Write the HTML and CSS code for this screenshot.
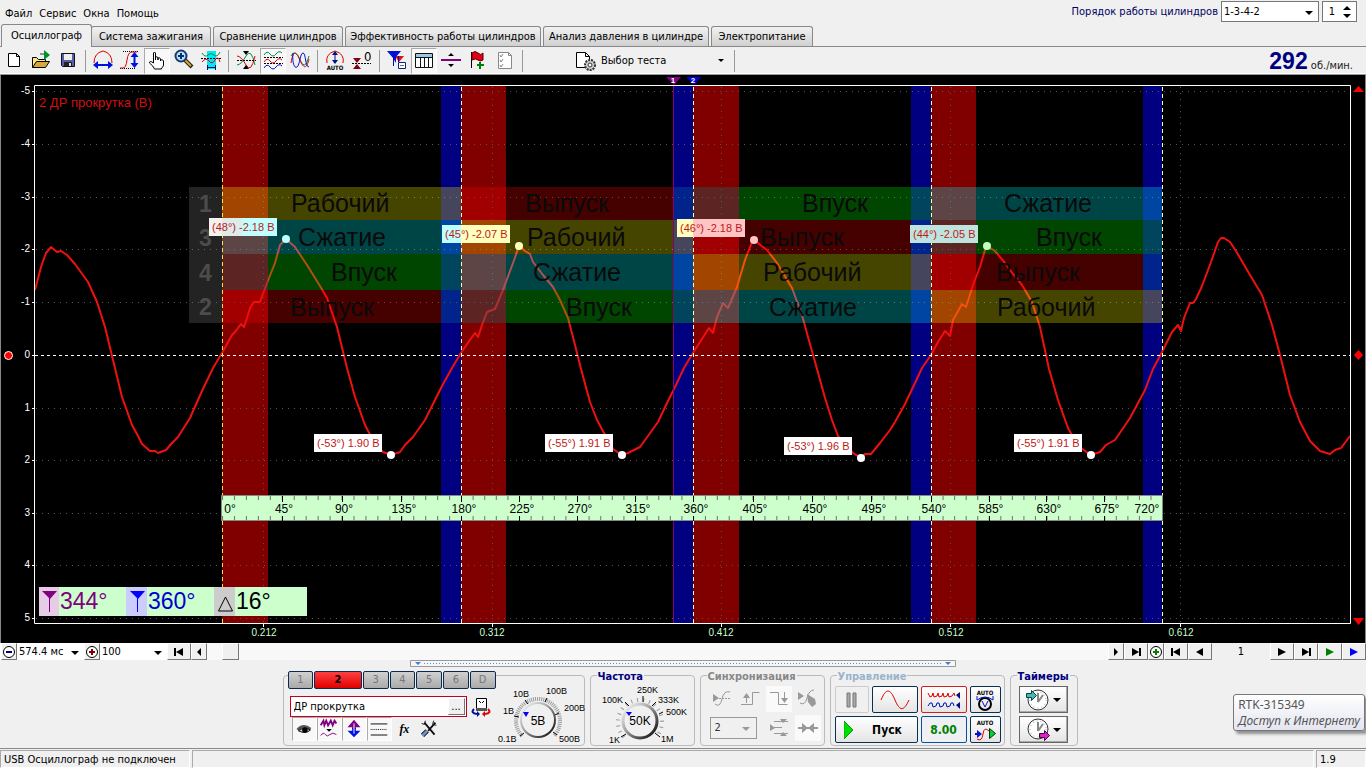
FILE: index.html
```html
<!DOCTYPE html>
<html lang="ru">
<head>
<meta charset="utf-8">
<title>USB Осциллограф</title>
<link rel="stylesheet" href="styles.css">
</head>
<body>
<div class="app">
<header class="top">
  <nav class="menu">
    <button>Файл</button><button>Сервис</button><button>Окна</button><button>Помощь</button>
  </nav>
  <div class="order">
    <label for="order">Порядок работы цилиндров</label>
    <span class="pick order-pick"><select id="order"><option>1-3-4-2</option></select></span>
    <span class="spin"><input id="first" type="text" value="1" aria-label="Первый цилиндр"><svg width="12" height="16" viewBox="0 0 12 16"><path d="M2 6l4-4 4 4zM2 10h8l-4 4z"/></svg></span>
  </div>
</header>

<div class="tabs" role="tablist">
  <button class="tab active" role="tab" aria-selected="true">Осциллограф</button>
  <button class="tab t2" role="tab">Система зажигания</button>
  <button class="tab t3" role="tab">Сравнение цилиндров</button>
  <button class="tab t4" role="tab">Эффективность работы цилиндров</button>
  <button class="tab t5" role="tab">Анализ давления в цилиндре</button>
  <button class="tab t6" role="tab">Электропитание</button>
</div>

<div class="toolbar">
  <button class="tool" aria-label="Новый"><svg viewBox="0 0 26 26"><path d="M7.500 5.500h8l3 3v10h-11zM15.500 5.500v3h3" fill="#fff" stroke="#000"/></svg></button>
  <button class="tool" aria-label="Открыть"><svg viewBox="0 0 26 26"><path d="M4.500 19.500v-10h4l2 2h7v4" fill="#ffe680" stroke="#000"/><path d="M4.500 19.500l4-6h13l-4 6z" fill="#d8a838" stroke="#000"/><path d="M16 2l6 5-6 5z" fill="#00902c"/><path d="M12 6h4" stroke="#333"/></svg></button>
  <button class="tool" aria-label="Сохранить"><svg viewBox="0 0 26 26"><path d="M6.500 5.500h13v13h-12l-1-1z" fill="#5560a8" stroke="#111"/><path d="M9 6h8v6H9z" fill="#eee"/><path d="M9 14h8v4H9z" fill="#222"/><path d="M14 15h2v3h-2z" fill="#ddd"/></svg></button>
  <span class="sep"></span>
  <button class="tool" aria-label="Период"><svg viewBox="0 0 26 26"><path d="M4 15q0-10 9-12q9 2 9 12" fill="none" stroke="#e00000"/><path d="M7 17h12" stroke="#0010e0" stroke-width="2"/><path d="M3 17l5-4v8zM23 17l-5-4v8z" fill="#0010e0"/></svg></button>
  <button class="tool" aria-label="Амплитуда"><svg viewBox="0 0 26 26"><path d="M6 3.500h16M3 20.500h16" stroke="#000" stroke-dasharray="1 1"/><path d="M3 20h3q3 0 4-8t5-8h5" fill="none" stroke="#e00000"/><path d="M17.500 6v12" stroke="#0010e0" stroke-width="2"/><path d="M17.500 4l4 5h-8zM17.500 20l4-5h-8z" fill="#0010e0"/></svg></button>
  <button class="tool pressed" aria-label="Рука"><svg viewBox="0 0 26 26"><path d="M9.500 15V5q1-2 2 0v7V9q2-1 2.500 1v2-2q2-1 2.500 1v2-1q2.500-1 3 1v4q0 2-2 3v1h-7q-1-3-5-6q0-3 4 0" fill="#fff" stroke="#000" stroke-linejoin="round"/></svg></button>
  <button class="tool" aria-label="Лупа"><svg viewBox="0 0 26 26"><path d="M14 12l7 7" stroke="#222" stroke-width="4"/><path d="M14 12l6 6" stroke="#e0a030" stroke-width="2"/><circle cx="10" cy="8" r="5.500" fill="#b8e4f4" stroke="#183870" stroke-width="2"/><path d="M7 8h6M10 5v6" stroke="#0a2a7a" stroke-width="2"/></svg></button>
  <button class="tool" aria-label="Фрагмент"><svg viewBox="0 0 26 26"><path d="M9 3h9v18H9z" fill="#00e8f8"/><path d="M4 5q3 5 6 2t6 0t6-3" fill="none" stroke="#00903a"/><path d="M3 10.500h20" stroke="#000" stroke-dasharray="2 1"/><path d="M4 14q4-5 7-1t6-1t5 2" fill="none" stroke="#e00000"/><path d="M9.500 17v5M17.500 17v5M10 19.500h7" stroke="#001080"/></svg></button>
  <span class="sep"></span>
  <button class="tool" aria-label="Совместить"><svg viewBox="0 0 26 26"><path d="M4 17q4 0 9-9t9 9" fill="none" stroke="#00903a"/><path d="M4 8q4 0 9 9t9-9" fill="none" stroke="#e00000"/><path d="M4 12.500h19" stroke="#000" stroke-dasharray="2 1"/><path d="M10 3h6l-3 4zM10 21h6l-3-4z"/></svg></button>
  <button class="tool pressed" aria-label="Раздельно"><svg viewBox="0 0 26 26" fill="none"><path d="M4 7q3-5 6-1t6 0t6-1" stroke="#00903a"/><path d="M4 9.500h19M4 15.500h19" stroke="#000" stroke-dasharray="2 1"/><path d="M4 14q3-5 6-1t6 0t6-1" stroke="#e00000"/><path d="M4 20q3-5 6-1t6 0t6-1" stroke="#0010d0"/></svg></button>
  <button class="tool" aria-label="Наложить"><svg viewBox="0 0 26 26" fill="none"><path d="M4 8q4-8 9 4t9-4" stroke="#00903a"/><path d="M4 15c2-12 5-13 9-3s7 8 9-1" stroke="#e00000"/><path d="M6 5c-1 8 1 16 4 14s3-14 6-14 2 14 6 14" stroke="#0010d0"/></svg></button>
  <span class="sep"></span>
  <button class="tool" aria-label="Авто"><svg viewBox="0 0 26 26"><path d="M5 15q-2-9 8-12q10 3 8 12" fill="none" stroke="#e00000"/><path d="M13 5v9" stroke="#001080"/><path d="M13 3l3 4h-6zM13 16l3-4h-6z" fill="#001080"/><text x="13" y="22" text-anchor="middle" class="micro">AUTO</text></svg></button>
  <button class="tool" aria-label="Ноль"><svg viewBox="0 0 26 26"><path d="M4 10h8l-4 5zM4 21h8l-4-5z" fill="#800010"/><path d="M3 15.500h19" stroke="#000" stroke-dasharray="2 1"/><text x="15" y="13" class="zero">0</text></svg></button>
  <span class="sep"></span>
  <button class="tool" aria-label="Маркеры"><svg viewBox="0 0 26 26"><path d="M11 8h9l-5 6z" fill="#e01010"/><path d="M3 3h14l-5 6v6l-3-5z" fill="#0010e0"/><path d="M9.500 3v15M14.500 8v6" stroke="#0010a0"/><path d="M14.500 14.500h7v6h-7z" fill="#fff" stroke="#102080"/><path d="M16 17.500h4" stroke="#668"/></svg></button>
  <button class="tool pressed" aria-label="Таблица"><svg viewBox="0 0 26 26"><path d="M4.500 5.500h17v14h-17z" fill="#fff" stroke="#111"/><path d="M5 6h16v3H5z" fill="#9fc4e8"/><path d="M5 9.500h16M9.500 9v10M13.500 9v10M17.500 9v10" stroke="#111"/></svg></button>
  <button class="tool" aria-label="Разделитель"><svg viewBox="0 0 26 26"><path d="M3 12h20" stroke="#800080" stroke-width="2"/><path d="M10 8h6l-3-3zM10 16h6l-3 3z"/></svg></button>
  <button class="tool" aria-label="Добавить флаг"><svg viewBox="0 0 26 26"><path d="M6.500 4v16" stroke="#000"/><path d="M7 5q3-3 6 0t5 0v7q-3 2-5 0t-6 0z" fill="#e00010" stroke="#500"/><path d="M15 14v7M12 17h7" stroke="#008000" stroke-width="2"/></svg></button>
  <button class="tool" aria-label="Отчёт"><svg viewBox="0 0 26 26"><path d="M6.500 4.500h10l3 3v13h-13zM16.500 4.500v3h3" fill="#fff" stroke="#888"/><path d="M8 7l1 2 2-3M8 12l1 2 2-3M8 17l1 2 2-3" fill="none" stroke="#888"/></svg></button>
  <span class="sep"></span>
  <button class="test"><svg width="22" height="22" viewBox="0 0 22 22"><path d="M1.500 2.500h9l4 4v11h-13zM10.500 2.500v4h4" fill="#fff" stroke="#000"/><circle cx="15" cy="15" r="5" fill="#cdd6c8" stroke="#333" stroke-width="2" stroke-dasharray="2 1"/><circle cx="15" cy="15" r="2" fill="#fff" stroke="#333"/></svg><span>Выбор теста</span><i class="arrow"></i></button>
  <span class="sep"></span>
  <output class="rpm"><b>292</b> об./мин.</output>
</div>

<svg class="scope" viewBox="0 75 1366 568" role="img" aria-label="Осциллограмма">
  <rect y="75" width="1366" height="568"/>
  <g fill="#800000"><path d="M222 86h46v537h-46zM461 86h45v537h-45zM693 86h46v537h-46zM931 86h45v537h-45z"/></g>
  <g fill="#000080"><path d="M441 86h20v537h-20zM673 86h20v537h-20zM911 86h20v537h-20zM1143 86h19v537h-19z"/></g>
  <g class="grid"><path d="M36 91.500h1314M36 144.500h1314M36 197.500h1314M36 249.500h1314M36 302.500h1314M36 408.500h1314M36 460.500h1314M36 513.500h1314M36 565.500h1314M36 618.500h1314M263.500 87v536M492.500 87v536M721.500 87v536M950.500 87v536M1180.500 87v536"/></g>
  <text x="39" y="107" class="channel">2 ДР прокрутка (В)</text>
  <path class="wave" d="M35 290L41 267 46 253 51 247 57 252 61 251 67 255 75 264 88 282 97 302 105 327 113 360 122 397 132 425 137 434 142 444 150 451 155 451 158 453 166 450 172 443 178 437 190 418 202 391 213 368 222 353 232 335 235 332 241 324 244 327 247 318 250 308 254 302 260 302 267 283 275 263 280 245 286 239 295 247 307 265 320 286 327 298 337 327 347 368 355 397 365 425 375 444 383 452 391 455 400 452 405 445 413 437 425 420 434 402 442 386 452 368 461 353 465 347 475 333 478 337 482 325 487 312 495 309 503 290 513 263 519 246 525 251 530 254 533 262 543 275 553 287 560 300 568 318 575 345 581 369 590 402 597 420 604 433 613 449 622 455 628 453 640 447 648 436 658 422 667 403 675 387 684 368 693 353 700 342 709 328 713 333 717 317 723 303 728 308 737 287 745 260 752 242 754 240 767 250 777 263 792 288 802 315 808 337 817 369 825 398 832 420 838 436 853 453 861 458 865 454 871 454 880 443 890 430 895 422 905 404 915 383 922 368 931 355 938 342 945 331 950 336 953 320 962 304 966 307 973 285 980 267 985 250 987 246 995 251 1005 263 1013 274 1022 285 1032 302 1040 327 1049 369 1058 400 1068 428 1078 446 1091 455 1100 452 1106 445 1115 440 1130 418 1145 390 1153 369 1162 352 1168 340 1172 332 1178 325 1181 331 1184 318 1190 303 1193 303 1196 299 1202 286 1211 262 1218 242 1221 238 1224 238 1230 242 1236 251 1250 275 1262 295 1272 325 1280 355 1290 395 1300 422 1310 441 1320 451 1330 454 1335 450 1341 448 1350 436"/>
  <g opacity=".27">
    <g fill="#ff0"><path d="M222 187h239v33h-239zM461 220h232v34h-232zM693 254h238v36h-238zM931 290h231v33h-231z"/></g>
    <g fill="#0ff"><path d="M222 220h239v34h-239zM461 254h232v36h-232zM693 290h238v33h-238zM931 187h231v33h-231z"/></g>
    <g fill="#0f0"><path d="M268 254h193v36h-193zM506 290h187v33h-187zM739 187h192v33h-192zM976 220h186v34h-186z"/></g>
    <g fill="#f00"><path d="M222 290h219v33h-219zM461 187h212v33h-212zM693 220h218v34h-218zM931 254h212v36h-212z"/></g>
    <g fill="#008585"><path d="M222 254h46v36h-46zM461 290h45v33h-45zM693 187h46v33h-46zM931 220h45v34h-45z"/></g>
    <g fill="#0085ae"><path d="M441 290h20v33h-20zM673 187h20v33h-20zM911 220h20v34h-20zM1143 254h19v36h-19z"/></g>
    <path d="M189 187h33v136h-33z" fill="#808080"/>
  </g>
  <g class="cyl"><text x="199" y="212">1</text><text x="199" y="246">3</text><text x="199" y="281">4</text><text x="199" y="315">2</text></g>
  <g class="phase">
    <text x="291" y="212">Рабочий</text><text x="525" y="212">Выпуск</text><text x="802" y="212">Впуск</text><text x="1004" y="212">Сжатие</text>
    <text x="298" y="246">Сжатие</text><text x="527" y="246">Рабочий</text><text x="760" y="246">Выпуск</text><text x="1036" y="246">Впуск</text>
    <text x="331" y="281">Впуск</text><text x="533" y="281">Сжатие</text><text x="763" y="281">Рабочий</text><text x="996" y="281">Выпуск</text>
    <text x="290" y="316">Выпуск</text><text x="566" y="316">Впуск</text><text x="769" y="316">Сжатие</text><text x="997" y="316">Рабочий</text>
  </g>
  <path d="M35 355.500h1316" class="zero-line"/>
  <path d="M461.500 87v536M693.500 87v536M931.500 87v536M1162.500 87v536" class="stroke-line"/>
  <path d="M222.500 87v536" class="stroke-line first"/>
  <path d="M673.500 82v541" stroke="#800080"/>
  <path d="M666 77h15l-7 8z" fill="#800080"/><path d="M686 77h15l-7 8z" fill="#0000e0"/>
  <g class="mark"><text x="673" y="83">1</text><text x="693" y="83">2</text></g>
  <path d="M34.500 85.500h1316v538h-1316z" fill="none" stroke="#fff"/>
  <path d="M32 91.500h3M32 144.500h3M32 197.500h3M32 249.500h3M32 302.500h3M32 355.500h3M32 408.500h3M32 460.500h3M32 513.500h3M32 565.500h3M32 618.500h3M263.500 624v3M492.500 624v3M721.500 624v3M950.500 624v3M1180.500 624v3" stroke="#fff"/>
  <g class="ylab"><text x="30" y="94">-5</text><text x="30" y="147">-4</text><text x="30" y="200">-3</text><text x="30" y="252">-2</text><text x="30" y="305">-1</text><text x="30" y="358">0</text><text x="30" y="411">1</text><text x="30" y="463">2</text><text x="30" y="516">3</text><text x="30" y="568">4</text><text x="30" y="621">5</text></g>
  <g class="xlab"><text x="264" y="636">0.212</text><text x="492" y="636">0.312</text><text x="721" y="636">0.412</text><text x="951" y="636">0.512</text><text x="1181" y="636">0.612</text></g>
  <circle cx="8.500" cy="355.500" r="4" fill="#f00" stroke="#fff"/>
  <path d="M1353 92l5.500-6 5.500 6zM1353 618h11l-5.500 7zM1354 355l4.500-5 4.500 5-4.500 5z" fill="#f00"/>

  <g class="note">
    <path d="M209 218h68v18h-68z" fill="#beffff"/><path d="M209 218h13v18h-13z" fill="#f4f0f0"/><path d="M222 218h20v18h-20z" fill="#ddebeb"/><text x="212" y="231">(48°) -2.18 В</text>
    <path d="M442 225h68v18h-68z" fill="#ffffbe"/><path d="M442 225h19v18h-19z" fill="#beffff"/><text x="445" y="238">(45°) -2.07 В</text>
    <path d="M677 219h68v18h-68z" fill="#ffc4c4"/><path d="M677 219h16v18h-16z" fill="#ffffbe"/><text x="680" y="232">(46°) -2.18 В</text>
    <path d="M910 225h68v18h-68z" fill="#bee4e0"/><text x="913" y="238">(44°) -2.05 В</text>
    <path d="M314 434h68v18h-68zM545 434h68v18h-68zM784 437h68v18h-68zM1014 434h68v18h-68z" fill="#fff"/>
    <text x="317" y="447">(-53°) 1.90 В</text><text x="548" y="447">(-55°) 1.91 В</text><text x="787" y="450">(-53°) 1.96 В</text><text x="1017" y="447">(-55°) 1.91 В</text>
  </g>
  <circle cx="286" cy="239" r="4" fill="#beffff"/><circle cx="519" cy="246" r="4" fill="#ffffbe"/><circle cx="754" cy="240" r="4" fill="#ffc4c4"/><circle cx="987" cy="246" r="4" fill="#beffbe"/>
  <g fill="#fff"><circle cx="391" cy="455" r="4"/><circle cx="622" cy="455" r="4"/><circle cx="861" cy="458" r="4"/><circle cx="1091" cy="455" r="4"/></g>

  <path d="M221.500 495.500h941v25h-941z" fill="#cfc" stroke="#888"/>
  <g class="ticks"><path pathLength="20" d="M222 498h239"/><path pathLength="20" d="M461 498h232"/><path pathLength="20" d="M693 498h238"/><path pathLength="20" d="M931 498h231"/><path pathLength="20" d="M222 518h239"/><path pathLength="20" d="M461 518h232"/><path pathLength="20" d="M693 518h238"/><path pathLength="20" d="M931 518h231"/></g>
  <path d="M282.500 496v6M342.500 496v6M401.500 496v6M461.500 496v6M519.500 496v6M577.500 496v6M635.500 496v6M693.500 496v6M753.500 496v6M812.500 496v6M871.500 496v6M931.500 496v6M989.500 496v6M1046.500 496v6M1104.500 496v6M282.500 516v5M342.500 516v5M401.500 516v5M461.500 516v5M519.500 516v5M577.500 516v5M635.500 516v5M693.500 516v5M753.500 516v5M812.500 516v5M871.500 516v5M931.500 516v5M989.500 516v5M1046.500 516v5M1104.500 516v5" stroke="#000"/>
  <g class="deg"><text x="230" y="513">0°</text><text x="284" y="513">45°</text><text x="344" y="513">90°</text><text x="404" y="513">135°</text><text x="464" y="513">180°</text><text x="522" y="513">225°</text><text x="580" y="513">270°</text><text x="638" y="513">315°</text><text x="696" y="513">360°</text><text x="755" y="513">405°</text><text x="815" y="513">450°</text><text x="874" y="513">495°</text><text x="934" y="513">540°</text><text x="991" y="513">585°</text><text x="1049" y="513">630°</text><text x="1107" y="513">675°</text><text x="1147" y="513">720°</text></g>

  <path d="M39 587h268v29h-268z" fill="#cfc"/><path d="M39 587h20v29h-20z" fill="#e6cce6"/><path d="M126 587h21v29h-21z" fill="#ccf"/><path d="M214 587h21v29h-21z" fill="#ccc"/>
  <path d="M42 591h15l-7 8zM49 598h1v14h-1z" fill="#800080"/><path d="M130 591h15l-7 8zM137 598h1v14h-1z" fill="#00f"/><path d="M225.500 597l-7 14h14z" fill="none" stroke="#000"/>
  <g class="cursor"><text x="60" y="609" fill="#800080">344°</text><text x="148" y="609" fill="#0000d0">360°</text><text x="236" y="609">16°</text></g>
  <path d="M.500 75v568M1365.500 75v568" stroke="#888"/>
</svg>

<div class="nav">
  <button class="n16" aria-label="Уменьшить"><svg width="14" height="14" viewBox="0 0 14 14"><circle cx="7" cy="7" r="5.500" fill="#fff" stroke="#000"/><path d="M4 7h6" stroke="#000080" stroke-width="2"/></svg></button>
  <span class="pick wide"><select aria-label="Развёртка"><option>574.4 мс</option></select></span>
  <button class="n16" aria-label="Увеличить"><svg width="14" height="14" viewBox="0 0 14 14"><circle cx="7" cy="7" r="5.500" fill="#fff" stroke="#000"/><path d="M4 7h6M7 4v6" stroke="#800000" stroke-width="2"/></svg></button>
  <span class="pick wide"><select aria-label="Масштаб"><option>100</option></select></span>
  <button class="n24" aria-label="В начало"><svg width="12" height="10" viewBox="0 0 12 10"><path d="M1 1h2v8H1zM3 5l7-4v8z"/></svg></button>
  <button class="n16" aria-label="Влево"><svg width="12" height="10" viewBox="0 0 12 10"><path d="M4 5l4-4v8z"/></svg></button>
  <div class="track"><button class="thumb" aria-label="Ползунок"></button></div>
  <button class="n16" aria-label="Вправо"><svg width="12" height="10" viewBox="0 0 12 10"><path d="M8 5L4 1v8z"/></svg></button>
  <button class="n24" aria-label="В конец"><svg width="12" height="10" viewBox="0 0 12 10"><path d="M9 1h2v8H9zM9 5L2 1v8z"/></svg></button>
  <button class="n16" aria-label="Добавить"><svg width="14" height="14" viewBox="0 0 14 14"><circle cx="7" cy="7" r="5.500" fill="#fff" stroke="#000"/><path d="M4 7h6M7 4v6" stroke="#008000" stroke-width="2"/></svg></button>
  <button class="n24" aria-label="Первый кадр"><svg width="12" height="10" viewBox="0 0 12 10"><path d="M1 1h2v8H1zM3 5l7-4v8z"/></svg></button>
  <button class="n24" aria-label="Предыдущий кадр"><svg width="12" height="10" viewBox="0 0 12 10"><path d="M2 5l7-4v8z"/></svg></button>
  <input class="frame" type="text" value="1" aria-label="Кадр">
  <button class="n24" aria-label="Следующий кадр"><svg width="12" height="10" viewBox="0 0 12 10"><path d="M10 5L2 1v8z"/></svg></button>
  <button class="n24" aria-label="Последний кадр"><svg width="12" height="10" viewBox="0 0 12 10"><path d="M9 1h2v8H9zM9 5L2 1v8z"/></svg></button>
  <button class="n24" aria-label="Воспроизвести"><svg width="12" height="10" viewBox="0 0 12 10"><path d="M10 5L2 1v8z" fill="#008000"/></svg></button>
  <button class="n24" aria-label="Воспроизвести всё"><svg width="12" height="10" viewBox="0 0 12 10"><path d="M10 5L2 1v8z" fill="#00f"/></svg></button>
</div>

<div class="splitter"><svg width="546" height="7" viewBox="0 0 546 7"><path d="M.500 .500h545v6H.500z" fill="#f6f6f6" stroke="#999"/><path d="M14 3.500h518" stroke="#4a90e0" stroke-dasharray="1 2"/><path d="M5 2h6l-3 3zM535 2h6l-3 3z" fill="#3a80d8"/></svg></div>

<main class="panel">
  <section class="group channel-group" aria-label="Канал">
    <div class="chan-left">
      <div class="chans"><button>1</button><button class="on">2</button><button>3</button><button>4</button><button>5</button><button>6</button><button>D</button></div>
      <div class="probe"><span class="probe-box"><input type="text" value="ДР прокрутка" aria-label="Датчик"><button aria-label="Выбрать датчик">...</button></span>
        <button class="flat" aria-label="Поменять"><svg width="20" height="20" viewBox="0 0 20 20"><path d="M5.500 1.500h10v10h-10z" fill="#fff" stroke="#000"/><path d="M8 4l2 2M13 4l-2 2" stroke="#000"/><path d="M5 11h11v3H5z" fill="#555"/><path d="M3 12q-4 4 3 5" fill="none" stroke="#0010a0" stroke-width="2"/><path d="M17 12q4 4-3 5" fill="none" stroke="#e00000" stroke-width="2"/><path d="M6 14v6l3-3z" fill="#0010a0"/><path d="M14 14v6l-3-3z" fill="#e00000"/></svg></button></div>
      <div class="modes">
        <button class="tool pressed" aria-label="Видимость"><svg viewBox="0 0 26 26"><path d="M6 14q6-7 14-1" fill="none" stroke="#555" stroke-width="3"/><path d="M7 15q6-5 13-1-5 5-13 1z" fill="#ccc" stroke="#000"/><circle cx="14" cy="14" r="3"/></svg></button>
        <button class="tool pressed" aria-label="Фильтр"><svg viewBox="0 0 26 26"><path d="M4 9l3-5 1 5 2-5 2 5 3-5 2 5 2-5 2 3" fill="none" stroke="#800080" stroke-width="2"/><path d="M10 13h6l-3 3z"/><path d="M4 20q3-4 5-1t5 0t7 0" fill="none" stroke="#800080"/></svg></button>
        <button class="tool pressed" aria-label="Инверсия"><svg viewBox="0 0 26 26"><path d="M13 3l7 8h-5v2h-4v-2H6z" fill="#800080"/><path d="M13 22l7-7h-5v-3h-4v3H6z" fill="#0010e0"/><path d="M13 7v11" stroke="#fff"/></svg></button>
        <button class="tool pressed" aria-label="Связь"><svg viewBox="0 0 26 26"><path d="M4 7.500h18M4 19.500h18" stroke="#000"/><path d="M4 13.500h18" stroke="#000" stroke-dasharray="1 1"/></svg></button>
        <button class="tool" aria-label="Функция"><svg viewBox="0 0 26 26"><text x="8" y="17" class="fx">fx</text></svg></button>
        <button class="tool" aria-label="Настройка"><svg viewBox="0 0 26 26"><path d="M8 6l11 13M20 6l-8 9" stroke="#111" stroke-width="2"/><path d="M11 15l-5 5" stroke="#111" stroke-width="5"/><path d="M11 15l-5 5" stroke="#6a94d0" stroke-width="3"/><path d="M5 7l3 1 1-4M18 4l-1 4 4 1" fill="none" stroke="#111"/></svg></button>
      </div>
    </div>
    <svg class="knob" width="90" height="68" viewBox="496 680 90 68">
      <defs><linearGradient id="rim" x1="0" y1="0" x2="1" y2="1"><stop offset="0" stop-color="#fff"/><stop offset=".4" stop-color="#aaa"/><stop offset="1" stop-color="#000"/></linearGradient></defs>
      <path d="M521 736A22 22 0 1 1 553 736" fill="none" stroke="#999" stroke-width="4" stroke-dasharray="1 1"/>
      <path d="M519 736l4-3M513 716l5 1M524 700l3 4M546 698l-2 4M558 713l-4 2M556 735l-4-3" stroke="#000"/>
      <circle cx="537" cy="720" r="17" fill="#f0f0f0" stroke="url(#rim)" stroke-width="2"/><path d="M522 712h6l-3 5z" fill="#00f"/>
      <g class="scale"><text x="497" y="742">0.1В</text><text x="502" y="714">1В</text><text x="512" y="697">10В</text><text x="545" y="694">100В</text><text x="563" y="711">200В</text><text x="558" y="742">500В</text></g><text x="537" y="725" class="value">5В</text>
    </svg>
  </section>
  <section class="group freq"><h2>Частота</h2>
    <svg class="knob" width="90" height="64" viewBox="600 682 90 64">
      <path d="M625 736A22 22 0 1 1 657 736" fill="none" stroke="#999" stroke-width="4" stroke-dasharray="1 5"/>
      <path d="M622 736l5-3M626 701l4 4M644 695v6M657 701l-4 4M664 711l-4 2M661 736l-5-4" stroke="#000"/>
      <circle cx="641" cy="720" r="17" fill="#f0f0f0" stroke="url(#rim)" stroke-width="3"/><path d="M627 711h6l-3 4z" fill="#00f"/>
      <g class="scale"><text x="610" y="742">1K</text><text x="603" y="702">100K</text><text x="638" y="692">250K</text><text x="659" y="702">333K</text><text x="667" y="714">500K</text><text x="662" y="741">1M</text></g><text x="641" y="724" class="value">50K</text>
    </svg>
  </section>
  <section class="group sync"><h2 class="dim">Синхронизация</h2>
    <div class="sync-grid">
      <button class="tool" disabled aria-label="Авто"><svg viewBox="0 0 26 26"><path d="M5 8v8l6-4z" fill="#999"/><path d="M7 18q5 4 7-5t8-7" fill="none" stroke="#999"/><path d="M11 12.500h11" fill="none" stroke="#999" stroke-dasharray="2 1"/></svg></button>
      <button class="tool" disabled aria-label="Фронт"><svg viewBox="0 0 26 26"><path d="M4 18.500h11.500v-12h7M9.500 17V9" fill="none" stroke="#999"/><path d="M6 12l3.500-5 3.500 5z" fill="#999"/></svg></button>
      <button class="tool hatched" disabled aria-label="Спад"><svg viewBox="0 0 26 26"><path d="M4 6.500h8.500v12h9M18.500 6v9" fill="none" stroke="#999"/><path d="M15 12l3.500 5 3.500-5z" fill="#999"/></svg></button>
      <button class="tool" disabled aria-label="Ручная"><svg viewBox="0 0 26 26"><path d="M3 6v8l6-4z" fill="#999"/><path d="M5 17q5 3 7-5t7-8" fill="none" stroke="#999"/><path d="M12 8l8 5 1 5-4 3-4-5z" fill="#999"/></svg></button>
      <span class="pick sync-pick"><select disabled aria-label="Канал синхронизации"><option>2</option></select></span>
      <button class="tool" disabled aria-label="Уровень"><svg viewBox="0 0 26 26"><path d="M8 6.500h14M8 12.500h8M8 18.500h14" stroke="#999"/><path d="M14 4h7l-4 4zM14 21h7l-4-4zM4 9v7l5-3z" fill="#999"/></svg></button>
      <button class="tool hatched" disabled aria-label="Центр"><svg viewBox="0 0 26 26"><path d="M3 13h20" stroke="#999" stroke-width="2"/><path d="M7 8l6 5-6 5zM19 8l-6 5 6 5z" fill="#999"/></svg></button>
    </div>
  </section>
  <section class="group control"><h2 class="pale">Управление</h2>
    <div class="control-grid">
      <button class="cmd off" aria-label="Пауза"><svg width="14" height="18" viewBox="0 0 14 18"><path d="M2 2h3v14H2zM8 2h3v14H8z" fill="#aaa" stroke="#777"/></svg></button>
      <button class="cmd" aria-label="Одиночный"><svg width="32" height="22" viewBox="0 0 32 22"><path d="M2 11C7-1 11-1 16 11s9 11 14 0" fill="none" stroke="#e00000"/></svg></button>
      <button class="cmd red" aria-label="Непрерывный"><svg width="36" height="22" viewBox="0 0 36 22" fill="none"><path d="M2 4l2 4 2-1 1-3 1 4 3-1 1-3 1 4 3-1 1-3 1 4 3-1 1-3 1 4 3-1 2-3 1 3" stroke="#e00000"/><path d="M2 17l2-3 2 0 1 4 3-1 1-3h2l1 4 3-1 1-3h2l1 4 3-1 1-3h2l1 3" stroke="#0010c0"/><path d="M34 3v7l-4-4zM34 13v7l-4-4z" fill="#001080"/></svg></button>
      <button class="cmd" aria-label="Автодиапазон"><svg width="26" height="24" viewBox="0 0 26 24"><text x="13" y="7" class="micro" text-anchor="middle">AUTO</text><circle cx="13" cy="16" r="6" fill="none" stroke="#000" stroke-width="2"/><path d="M10 13l3 6 3-6" fill="none" stroke="#0010d0"/><path d="M5 12q8-6 16 0M5 12v-4M21 12v-4" fill="none" stroke="#0010d0"/></svg></button>
      <button class="cmd start"><svg width="10" height="20" viewBox="0 0 10 20"><path d="M0 1l9 9-9 9z" fill="#00e000" stroke="#00a000"/></svg><span>Пуск</span></button>
      <button class="cmd num">8.00</button>
      <button class="cmd" aria-label="Автозапуск"><svg width="26" height="24" viewBox="0 0 26 24"><text x="13" y="7" class="micro" text-anchor="middle">AUTO</text><path d="M3 16h4" stroke="#0010d0" stroke-width="2"/><path d="M5 12l5 4-5 4z" fill="#0010d0"/><path d="M5 21q5 3 6-5t6-3" fill="none" stroke="#e00000"/><path d="M17.500 10.500v10l6-5z" fill="#00d040" stroke="#030"/></svg></button>
    </div>
  </section>
  <section class="group timers"><h2>Таймеры</h2>
    <button class="timer" aria-label="Таймер запуска"><svg width="26" height="24" viewBox="0 0 26 24"><circle cx="14" cy="12" r="10" fill="#fff" stroke="#333"/><circle cx="14" cy="12" r="8" fill="none" stroke="#999" stroke-dasharray="1 3"/><path d="M14 14V5M14 14l5-7" stroke="#888" stroke-width="2"/><path d="M2.500 5.500h5v-3l5 5-5 5v-3h-5z" fill="#48b8b0" stroke="#044"/></svg><i class="arrow"></i></button>
    <button class="timer" aria-label="Таймер останова"><svg width="26" height="24" viewBox="0 0 26 24"><circle cx="14" cy="11" r="10" fill="#fff" stroke="#333"/><circle cx="14" cy="11" r="8" fill="none" stroke="#999" stroke-dasharray="1 3"/><path d="M14 13V4M14 13l5-7" stroke="#888" stroke-width="2"/><path d="M15.500 15.500h5v-3l5 5-5 5v-3h-5z" fill="#e020c0" stroke="#404"/></svg><i class="arrow"></i></button>
  </section>
</main>

<footer class="status"><span class="st-a">USB Осциллограф не подключен</span><span class="st-b"></span><span class="st-c">1.9</span></footer>
<div class="tip" role="tooltip"><span>RTK-315349</span><em>Доступ к Интернету</em></div>
</div>
</body>
</html>
```

FILE: styles.css
```css
* { box-sizing: border-box; }
body { margin: 0; background: #f0f0f0; color: #000; font: 11px/14px "DejaVu Sans Condensed", "DejaVu Sans", sans-serif; }
button, input, select { font: inherit; color: inherit; margin: 0; padding: 0; border: 0; background: none; border-radius: 0; }
button { display: flex; align-items: center; justify-content: center; white-space: nowrap; }
svg { display: block; flex: none; }
.app { position: relative; display: flex; flex-direction: column; min-height: 100vh; }

.top { display: flex; justify-content: space-between; height: 24px; }
.menu { display: flex; gap: 7px; padding: 3px 5px 0; }
.order { display: flex; align-items: center; gap: 3px; padding: 0 9px 1px 0; color: #000060; }
.pick { position: relative; display: block; background: #fff; color: #000; }
.pick select { appearance: none; width: 100%; height: 100%; padding-left: 2px; opacity: 1; }
.pick::after, .arrow { content: ""; width: 0; height: 0; border: 4px solid transparent; border-top-color: #000; border-bottom: 0; }
.pick::after { position: absolute; right: 5px; top: 50%; margin-top: -1px; pointer-events: none; }
.order-pick { width: 98px; height: 21px; border: 1px solid #777; }
.spin { display: flex; align-items: center; width: 35px; height: 21px; border: 1px solid #777; background: #fff; color: #000; }
.spin input { width: 18px; text-align: center; }

.tabs { display: flex; align-items: flex-end; gap: 2px; height: 23px; padding-left: 1px; border-bottom: 1px solid #888; }
.tab { height: 20px; border: 1px solid #888; border-bottom: 0; border-radius: 3px 3px 0 0; background: linear-gradient(#f2f2f2, #d0d0d0); }
.tab.active { width: 91px; height: 23px; margin: 0 -3px -1px 0; background: #f0f0f0; }
.t2 { width: 120px; } .t3 { width: 130px; } .t4 { width: 196px; } .t5 { width: 166px; } .t6 { width: 102px; }

.toolbar { display: flex; align-items: center; gap: 1px; height: 28px; padding: 0 13px 0 1px; border-bottom: 1px solid #999; box-shadow: inset 0 -1px #fff; }
.tool { width: 26px; height: 26px; flex: none; }
.tool svg { width: 26px; height: 26px; }
.pressed { border: 1px solid #aaa; border-right-color: #fff; border-bottom-color: #fff; background: #f8f8f8; }
.sep { width: 1px; height: 22px; margin: 0 3px; background: #999; flex: none; }
.micro { font: bold 6px "DejaVu Sans Condensed", sans-serif; }
.zero { font: 13px "DejaVu Sans Condensed", sans-serif; }
.fx { font: italic bold 13px "Liberation Serif", serif; }
.test { width: 203px; height: 26px; padding: 0 6px 0 48px; justify-content: flex-start; gap: 4px; }
.arrow { display: block; margin-left: auto; }
.test .arrow { border-width: 3px 3px 0; }
.rpm { margin-left: auto; color: #222; }
.rpm b { font: bold 23px/24px "Liberation Sans", sans-serif; color: #000080; }

.scope { width: 100%; height: auto; font-family: "Liberation Sans", sans-serif; }
.grid path { fill: none; stroke: #555; stroke-dasharray: 1 5; }
.channel { font-size: 13px; fill: #d01010; }
.wave { fill: none; stroke: #f01010; stroke-width: 2; stroke-linejoin: round; }
.zero-line { stroke: #fff; stroke-dasharray: 3 3; }
.stroke-line { stroke: #ffffa0; stroke-dasharray: 4 3; }
.stroke-line.first { stroke: #ffe040; }
.phase { font-size: 25px; fill: #0a0a0a; }
.cyl { font-size: 23px; font-weight: bold; fill: #4c4c4c; }
.mark { font-size: 8px; font-weight: bold; fill: #fff; text-anchor: middle; }
.ylab { font-size: 10px; fill: #fff; text-anchor: end; }
.xlab { font-size: 10px; fill: #cfc; text-anchor: middle; }
.note { font-size: 11px; }
.note text { fill: #c01818; }
.ticks path { fill: none; stroke: #777; stroke-width: 4; stroke-dasharray: .09 .91; }
.deg { font-size: 12px; text-anchor: middle; }
.cursor { font-size: 23px; }

.nav { display: flex; height: 17px; padding-left: 1px; background: #fff; }
.nav button { height: 17px; border: 1px solid; border-color: #fff #777 #777 #fff; background: #f0f0f0; flex: none; }
.nav .n16 { width: 16px; }
.nav .n24 { width: 24px; }
.nav .wide { width: 67px; }
.track { flex: 1; padding-left: 15px; background: #f8f8f8; }
.nav .thumb { width: 17px; }
.frame { width: 58px; text-align: center; background: #f0f0f0; }
.splitter { display: flex; justify-content: center; height: 8px; }

.panel { display: flex; justify-content: center; gap: 5px; height: 81px; padding: 7px 6px 2px 0; border-bottom: 1px solid #888; }
.group { border: 1px solid #bbb; border-radius: 4px; }
.group h2 { width: max-content; margin: -6px 0 0 6px; padding: 0 1px; background: #f0f0f0; font: bold 11px/14px "DejaVu Sans Condensed", sans-serif; color: #000080; }
.group h2.dim { color: #888; }
.group h2.pale { color: #9ab4cc; }
.channel-group { display: flex; width: 302px; }
.chan-left { width: 208px; margin: -5px 0 0 4px; }
.chans { display: flex; gap: 1px; background: #f0f0f0; }
.chans button { width: 26px; height: 18px; border: 1px solid #0a2a50; border-radius: 2px; background: linear-gradient(#d0d0d0, #aaa); color: #777; }
.chans .on { width: 48px; background: linear-gradient(#ff4040, #e00000); color: #000; font-weight: bold; }
.probe { display: flex; gap: 4px; margin-top: 7px; padding-left: 2px; }
.probe-box { display: flex; width: 177px; height: 21px; padding: 1px; border: 1px solid #c00020; background: #fff; }
.probe-box input { flex: 1; min-width: 0; padding-left: 2px; }
.probe-box button { width: 17px; border: 1px solid; border-color: #fff #777 #777 #fff; background: #f0f0f0; }
.modes { display: flex; padding-left: 4px; }
.modes .tool { width: 25px; height: 24px; }
.modes .tool svg { width: 24px; height: 24px; }
.channel-group .knob { margin: 4px 0 0 1px; }
.scale { font: 9px "Liberation Sans", sans-serif; }
.value { font: 12px "Liberation Sans", sans-serif; text-anchor: middle; }
.freq { width: 105px; }
.freq .knob { margin: -1px 0 0 8px; }
.sync { width: 125px; }
.sync-grid { display: grid; grid-template-columns: repeat(4, 29px); gap: 3px 0; padding: 2px 0 0 7px; align-items: center; }
.hatched { background: #fafafa; }
.sync-pick { grid-column: span 2; width: 47px; height: 22px; margin-left: 2px; border: 1px solid #999; background: #f0f0f0; }
.sync-pick::after { border-top-color: #999; right: 6px; }
.sync-pick select { padding-left: 4px; color: #333; }
.control { width: 175px; }
.control-grid { display: grid; grid-template-columns: 34px 46px 46px 31px; gap: 3px; padding: 2px 0 0 4px; }
.cmd { height: 27px; border: 1px solid #0a3050; border-radius: 2px; background: linear-gradient(#fff, #e4e4e4); }
.cmd.off { border-color: #ccc; background: #f0f0f0; }
.cmd.red { border-color: #d02020; }
.start { grid-column: span 2; gap: 18px; padding-right: 6px; font-weight: bold; font-size: 12px; }
.num { border-color: #0a50a0; background: #eef0f4; color: #008000; font-weight: bold; font-size: 12px; }
.timers { display: flex; flex-direction: column; gap: 3px; width: 68px; }
.timers h2 { margin-bottom: -1px; }
.timer { width: 49px; height: 27px; margin-left: 8px; padding: 0 6px 0 4px; border: 1px solid #666; background: linear-gradient(#fff, #e4e4e4); box-shadow: inset -1px -1px #aaa; }

.status { display: flex; gap: 2px; flex: 1; min-height: 18px; padding-top: 1px; }
.status span { padding: 2px 3px 0; border: 1px solid; border-color: #aaa #fff #fff #aaa; }
.st-a { width: 190px; } .st-b { flex: 1; } .st-c { width: 50px; }
.tip { position: absolute; right: 1px; bottom: 37px; display: flex; flex-direction: column; height: 37px; padding: 2px 4px; border: 1px solid #777; border-radius: 3px; background: linear-gradient(#fff, #e4e5f0); box-shadow: 3px 3px 3px #0006; color: #555; font: 12px/16px "Noto Sans", sans-serif; white-space: nowrap; }
```
